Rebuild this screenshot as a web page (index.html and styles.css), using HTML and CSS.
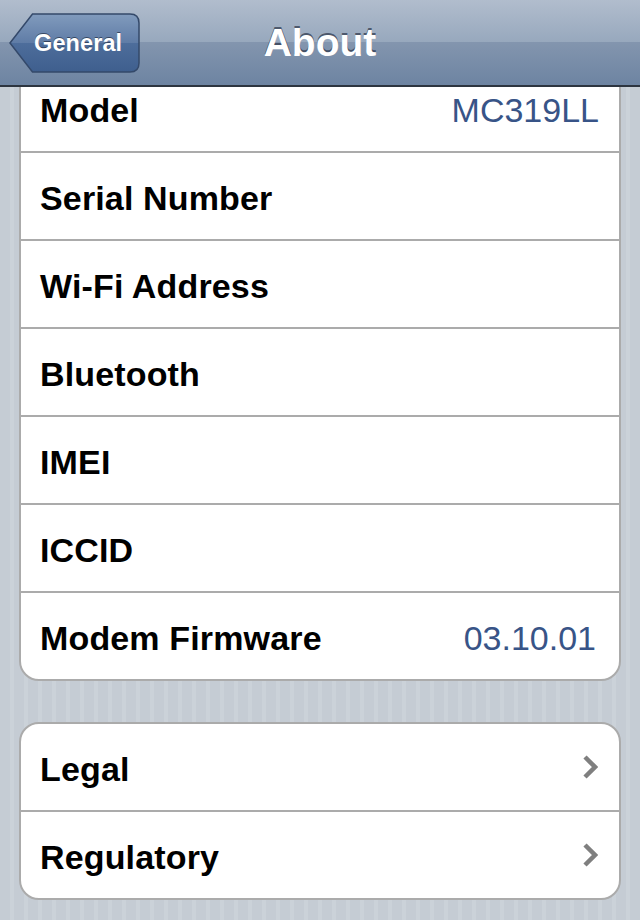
FILE: index.html
```html
<!DOCTYPE html>
<html>
<head>
<meta charset="utf-8">
<link rel="stylesheet" href="styles.css">
</head>
<body>
<div class="screen">
  <header class="navbar">
    <div class="nav-left">
      <div class="back">
        <svg class="back-shape" width="131" height="60" viewBox="0 0 131 60">
          <defs>
            <linearGradient id="bg" x1="0" y1="0" x2="0" y2="1">
              <stop offset="0" stop-color="#819bbd"/>
              <stop offset="0.5" stop-color="#5f7ca6"/>
              <stop offset="0.5" stop-color="#4d6d9b"/>
              <stop offset="1" stop-color="#3f5f8e"/>
            </linearGradient>
          </defs>
          <path d="M1 30 L23.5 1 H121 Q130 1 130 10 V50 Q130 59 121 59 H23.5 Z" fill="url(#bg)" stroke="#34496a" stroke-width="1.5"/>
        </svg>
        <span class="back-label">General</span>
      </div>
    </div>
    <h1 class="title">About</h1>
    <div class="nav-right"></div>
  </header>
  <main class="content">
    <section class="card card-first">
      <div class="row"><span class="label">Model</span><span class="value">MC319LL</span></div>
      <div class="row"><span class="label">Serial Number</span></div>
      <div class="row"><span class="label">Wi-Fi Address</span></div>
      <div class="row"><span class="label">Bluetooth</span></div>
      <div class="row"><span class="label">IMEI</span></div>
      <div class="row"><span class="label">ICCID</span></div>
      <div class="row"><span class="label">Modem Firmware</span><span class="value value-fw">03.10.01</span></div>
    </section>
    <section class="card card-second">
      <div class="row"><span class="label">Legal</span>
        <svg class="chev" width="16" height="26" viewBox="0 0 16 26"><polyline points="3,3 13,13 3,23" fill="none" stroke="#7f7f7f" stroke-width="4.5" stroke-linejoin="miter"/></svg>
      </div>
      <div class="row"><span class="label">Regulatory</span>
        <svg class="chev" width="16" height="26" viewBox="0 0 16 26"><polyline points="3,3 13,13 3,23" fill="none" stroke="#7f7f7f" stroke-width="4.5" stroke-linejoin="miter"/></svg>
      </div>
    </section>
  </main>
</div>
</body>
</html>
```
FILE: styles.css
```css
html, body {
  margin: 0;
  padding: 0;
}
body {
  width: 640px;
  height: 920px;
  overflow: hidden;
  font-family: "Liberation Sans", Arial, Helvetica, sans-serif;
  background: repeating-linear-gradient(90deg, #c5ccd4 0px, #c5ccd4 10px, #cbd2d9 10px, #cbd2d9 14px);
}
.screen {
  width: 640px;
  height: 920px;
  display: flex;
  flex-direction: column;
  overflow: hidden;
}
.navbar {
  position: relative;
  z-index: 2;
  flex: 0 0 auto;
  height: 85px;
  border-top: 2px solid #cdd5df;
  border-bottom: 2px solid #2d3540;
  box-sizing: content-box;
  margin-top: -2px;
  background: linear-gradient(180deg, #b1bdcd 0%, #97a8bd 50%, #8395ae 50%, #6d84a2 100%);
  display: grid;
  grid-template-columns: 1fr auto 1fr;
  align-items: center;
}
.nav-left {
  padding-left: 9px;
  display: flex;
  align-items: center;
}
.back {
  display: grid;
  width: 131px;
  height: 60px;
  margin-top: 1px;
}
.back-shape {
  grid-area: 1 / 1;
}
.back-label {
  grid-area: 1 / 1;
  align-self: center;
  padding-left: 25px;
  color: #fff;
  font-weight: bold;
  font-size: 23.5px;
  letter-spacing: 0.1px;
  text-shadow: 0 -1.5px 0 rgba(20, 30, 50, 0.6);
}
.title {
  margin: 0;
  font-size: 39px;
  font-weight: bold;
  color: #fff;
  text-shadow: 0 -2px 0 rgba(40, 50, 70, 0.7);
  letter-spacing: 0;
}
.content {
  flex: 1 1 auto;
  overflow: hidden;
  position: relative;
  z-index: 1;
}
.card {
  margin: 0 19px;
  background: #fff;
  border: 2px solid #ababab;
  border-radius: 20px;
}
.card-first {
  margin-top: -24px;
}
.card-second {
  margin-top: 41px;
}
.row {
  box-sizing: border-box;
  display: flex;
  align-items: center;
  justify-content: space-between;
  padding: 4px 20px 0 19px;
  border-bottom: 2px solid #ababab;
  height: 88px;
}
.row:last-child {
  border-bottom: none;
  height: 86px;
}
.label {
  font-size: 34px;
  font-weight: bold;
  color: #000;
  letter-spacing: 0.15px;
}
.value {
  font-size: 34px;
  color: #385487;
}
.value-fw {
  margin-right: 3px;
}
.chev {
  margin-right: 1px;
  margin-top: -4px;
}
```
